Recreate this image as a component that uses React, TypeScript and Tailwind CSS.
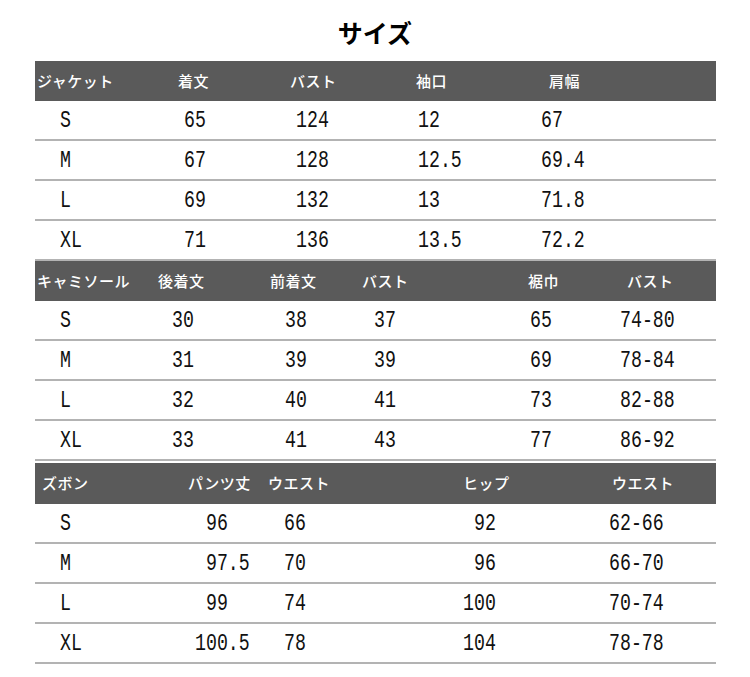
import React from "react";

const headFont = { fontFamily: '"Noto Sans CJK JP", "Noto Sans", sans-serif' };

function Val({ children }: { children: React.ReactNode }) {
  return (
    <span className="inline-block origin-left scale-x-[0.76] whitespace-pre font-['Liberation_Mono',monospace] text-[24px] leading-none text-[#111]">
      {children}
    </span>
  );
}

function Head({ children }: { children: React.ReactNode }) {
  return (
    <span className="whitespace-nowrap font-['Noto_Sans_CJK_JP',sans-serif] text-[15px] font-medium tracking-[0.5px] text-white">
      {children}
    </span>
  );
}

const t1 = [
  ["S", "65", "124", "12", "67"],
  ["M", "67", "128", "12.5", "69.4"],
  ["L", "69", "132", "13", "71.8"],
  ["XL", "71", "136", "13.5", "72.2"],
];

const t2 = [
  ["S", "30", "38", "37", "65", "74-80"],
  ["M", "31", "39", "39", "69", "78-84"],
  ["L", "32", "40", "41", "73", "82-88"],
  ["XL", "33", "41", "43", "77", "86-92"],
];

const t3 = [
  ["S", " 96", "66", " 92", "62-66"],
  ["M", " 97.5", "70", " 96", "66-70"],
  ["L", " 99", "74", "100", "70-74"],
  ["XL", "100.5", "78", "104", "78-78"],
];

export default function App() {
  return (
    <div className="h-[677px] w-[750px] overflow-hidden bg-white" style={headFont}>
      <div className="flex h-[61px] items-center justify-center pt-[4px]">
        <h1 className="font-['Noto_Sans_CJK_JP',sans-serif] text-[25px] font-bold leading-none text-black">
          サイズ
        </h1>
      </div>
      <div className="ml-[35px] w-[681px]">
        {/* Table 1 */}
        <div className="grid h-10 grid-cols-[141px_112px_126px_133px_1fr] items-center bg-[#5a5a5a] pl-[2px]">
          <Head>ジャケット</Head>
          <Head>着文</Head>
          <Head>バスト</Head>
          <Head>袖口</Head>
          <Head>肩幅</Head>
        </div>
        {t1.map((r) => (
          <div
            key={"a" + r[0]}
            className="grid h-10 grid-cols-[124px_112px_122px_123px_1fr] items-center border-b-2 border-[#b3b3b3] pl-[25px]"
          >
            {r.map((c, i) => (
              <div key={i}>
                <Val>{c}</Val>
              </div>
            ))}
          </div>
        ))}

        {/* Table 2 */}
        <div className="grid h-10 grid-cols-[121px_112px_92px_166px_99px_1fr] items-center bg-[#5a5a5a] pl-[2px]">
          <Head>キャミソール</Head>
          <Head>後着文</Head>
          <Head>前着文</Head>
          <Head>バスト</Head>
          <Head>裾巾</Head>
          <Head>バスト</Head>
        </div>
        {t2.map((r) => (
          <div
            key={"b" + r[0]}
            className="grid h-10 grid-cols-[112px_113px_89px_156px_90px_1fr] items-center border-b-2 border-[#b3b3b3] pl-[25px]"
          >
            {r.map((c, i) => (
              <div key={i}>
                <Val>{c}</Val>
              </div>
            ))}
          </div>
        ))}

        {/* Table 3 */}
        <div className="mt-[2px] grid h-[41px] grid-cols-[146px_80px_195px_149px_1fr] items-center bg-[#5a5a5a] pl-[7px]">
          <Head>ズボン</Head>
          <Head>パンツ丈</Head>
          <Head>ウエスト</Head>
          <Head>ヒップ</Head>
          <Head>ウエスト</Head>
        </div>
        {t3.map((r) => (
          <div
            key={"c" + r[0]}
            className="grid h-10 grid-cols-[135px_89px_179px_146px_1fr] items-center border-b-2 border-[#b3b3b3] pl-[25px]"
          >
            {r.map((c, i) => (
              <div key={i}>
                <Val>{c}</Val>
              </div>
            ))}
          </div>
        ))}
      </div>
    </div>
  );
}
